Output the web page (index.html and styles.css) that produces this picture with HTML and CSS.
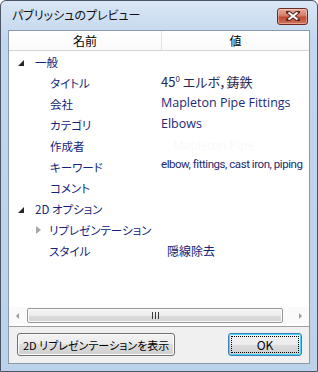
FILE: index.html
```html
<!DOCTYPE html>
<html lang="ja">
<head>
    <meta charset="UTF-8">
    <title>パブリッシュのプレビュー</title>
    <link rel="stylesheet" href="styles.css">
</head>
<body>

    <!-- Dialog window -->
    <div class="window">
        <div class="titlebar">
            <span class="title">パブリッシュのプレビュー</span>
            <div class="close-btn">
                <svg width="14" height="10" viewBox="0 0 14 10">
                    <path d="M2 1 L12 9 M12 1 L2 9" stroke="#5a2a22" stroke-width="4" stroke-linecap="square"/>
                    <path d="M2.5 1.5 L11.5 8.5 M11.5 1.5 L2.5 8.5" stroke="#fff" stroke-width="2.2"/>
                </svg>
            </div>
        </div>

        <div class="client">
            <!-- Property grid -->
            <div class="grid">
                <div class="grid-header">
                    <div class="head-name">名前</div>
                    <div class="head-value">値</div>
                </div>

                <div class="grid-body">
                    <div class="row">
                        <div class="name category"><span class="expander open"></span>一般</div>
                        <div class="value"></div>
                    </div>
                    <div class="row">
                        <div class="name child">タイトル</div>
                        <div class="value jp">45<sup>0</sup> エルボ，鋳鉄</div>
                    </div>
                    <div class="row">
                        <div class="name child">会社</div>
                        <div class="value latin">Mapleton Pipe Fittings</div>
                    </div>
                    <div class="row">
                        <div class="name child">カテゴリ</div>
                        <div class="value latin">Elbows</div>
                    </div>
                    <div class="row">
                        <div class="name child">作成者</div>
                        <div class="value ghost">Mapleton Pipe</div>
                    </div>
                    <div class="row">
                        <div class="name child">キーワード</div>
                        <div class="value narrow">elbow, fittings, cast iron, piping</div>
                    </div>
                    <div class="row">
                        <div class="name child">コメント</div>
                        <div class="value"></div>
                    </div>
                    <div class="row">
                        <div class="name category"><span class="expander open"></span>2D オプション</div>
                        <div class="value"></div>
                    </div>
                    <div class="row">
                        <div class="name sub"><span class="expander closed"></span>リプレゼンテーション</div>
                        <div class="value"></div>
                    </div>
                    <div class="row">
                        <div class="name sub-child">スタイル</div>
                        <div class="value combo">隠線除去</div>
                    </div>
                </div>

                <!-- Horizontal scrollbar -->
                <div class="hscroll">
                    <div class="arrow left"></div>
                    <div class="track">
                        <div class="thumb"><span class="grip"></span></div>
                    </div>
                    <div class="arrow right"></div>
                </div>
            </div>

            <!-- Buttons -->
            <div class="buttons">
                <button class="btn">2D リプレゼンテーションを表示</button>
                <button class="btn default"><span class="focus">OK</span></button>
            </div>
        </div>
    </div>

</body>
</html>
```

FILE: styles.css
```css
/* Reset */
* {
    margin: 0;
    padding: 0;
    box-sizing: border-box;
}

body {
    font-family: "Noto Sans CJK JP", "Noto Sans", sans-serif;
    font-feature-settings: "palt";
    background: #fff;
    width: 318px;
    height: 372px;
    overflow: hidden;
}

/* Window frame */
.window {
    width: 318px;
    height: 372px;
    border: 1px solid #4b5566;
    border-radius: 6px 6px 0 0;
    background: linear-gradient(#d9e6f5, #c2d6ee 40px, #bcd2ea);
    display: flex;
    flex-direction: column;
    padding: 0 7px 7px 7px;
}

.titlebar {
    height: 29px;
    display: flex;
    align-items: center;
    justify-content: space-between;
    padding: 0 2px 0 4px;
}

.title {
    font-size: 12px;
    color: #111;
    margin-top: -2px;
}

.close-btn {
    width: 31px;
    height: 17px;
    margin-top: 1px;
    border: 1px solid #6b2c22;
    border-radius: 3px;
    background: linear-gradient(#e8a99a, #d77a66 45%, #c24a31 55%, #d2735a);
    box-shadow: inset 0 0 0 1px rgba(255, 255, 255, 0.35);
    display: flex;
    align-items: center;
    justify-content: center;
}

/* Client area */
.client {
    flex: 1;
    background: #f0f0f0;
    border: 1px solid #8b9aab;
    display: flex;
    flex-direction: column;
}

/* Property grid */
.grid {
    height: 296px;
    background: #fff;
    border-bottom: 1px solid #a0a0a0;
    display: flex;
    flex-direction: column;
    color: #13237a;
}

.grid-header {
    height: 20px;
    display: grid;
    grid-template-columns: 153px 1fr;
    border-bottom: 1px solid #d5d5d5;
    background: linear-gradient(#fff, #fafafa);
    font-size: 12px;
    color: #000;
}

.head-name,
.head-value {
    display: flex;
    align-items: center;
    justify-content: center;
}

.head-name {
    border-right: 1px solid #e3e3e3;
}

.grid-body {
    flex: 1;
}

.row {
    height: 21px;
    display: grid;
    grid-template-columns: 152px 1fr;
    align-items: center;
    font-size: 11.5px;
}

.name {
    display: flex;
    align-items: center;
    white-space: nowrap;
}

.name.category {
    padding-left: 9px;
}

.name.child {
    padding-left: 41px;
}

.name.sub {
    padding-left: 27px;
}

.name.sub-child {
    padding-left: 40px;
}

.expander {
    width: 0;
    height: 0;
    margin-right: 10px;
}

.expander.open {
    border-left: 6px solid transparent;
    border-bottom: 6px solid #262626;
    margin-top: 2px;
    margin-right: 11px;
}

.expander.closed {
    border-top: 4px solid transparent;
    border-bottom: 4px solid transparent;
    border-left: 5px solid #a8a8a8;
    margin-right: 8px;
}

.value {
    white-space: nowrap;
}

.value.jp {
    font-size: 13px;
    color: #222a55;
    margin-top: -3px;
}

.value.jp sup {
    font-size: 8px;
}

.value.latin {
    font-family: "Open Sans", "Noto Sans", sans-serif;
    font-size: 12.5px;
    color: #1d2a78;
    margin-top: -3px;
}

.value.narrow {
    font-family: "Roboto", sans-serif;
    font-size: 11.5px;
    letter-spacing: -0.45px;
    color: #1d2a70;
    margin-top: -5px;
}

.value.ghost {
    font-family: "Open Sans", sans-serif;
    font-size: 12px;
    color: #f8f9fb;
    padding-left: 12px;
}

.value.combo {
    padding-left: 6px;
    font-size: 12px;
    color: #0f2274;
}

/* Scrollbar */
.hscroll {
    height: 17px;
    margin-bottom: 2px;
    display: flex;
    align-items: center;
    background: #fafafa;
}

.arrow {
    width: 17px;
    height: 17px;
    display: flex;
    align-items: center;
    justify-content: center;
}

.arrow::before {
    content: '';
    border-top: 3px solid transparent;
    border-bottom: 3px solid transparent;
}

.arrow.left::before {
    border-right: 3px solid #9a9a9a;
}

.arrow.right::before {
    border-left: 3px solid #9a9a9a;
}

.track {
    flex: 1;
    height: 17px;
    padding: 1px 9px 1px 1px;
}

.thumb {
    height: 15px;
    border: 1px solid #979797;
    border-radius: 2px;
    background: linear-gradient(#f5f5f5, #ececec 50%, #dcdcdc 50%, #d4d4d4);
    box-shadow: inset 0 0 0 1px #fbfbfb;
    display: flex;
    align-items: center;
    justify-content: center;
}

.grip {
    width: 7px;
    height: 7px;
    background: repeating-linear-gradient(90deg, #3c3c3c 0 1px, transparent 1px 3px);
}

/* Buttons */
.buttons {
    flex: 1;
    display: flex;
    justify-content: space-between;
    align-items: flex-start;
    padding: 6px 7px 0 8px;
}

.btn {
    height: 23px;
    padding: 0 5px;
    border: 1px solid #707070;
    border-radius: 3px;
    background: linear-gradient(#f2f2f2, #ebebeb 50%, #dddddd 50%, #cfcfcf);
    box-shadow: inset 0 0 0 1px #fcfcfc;
    font-family: "Noto Sans CJK JP", sans-serif;
    font-feature-settings: "palt";
    font-size: 11px;
    color: #000;
}

.btn.default {
    width: 74px;
    padding: 2px;
    font-size: 12px;
    border-color: #3c7fb1;
    box-shadow: inset 0 0 0 1px #48d5fb;
}

.focus {
    display: flex;
    align-items: center;
    justify-content: center;
    height: 100%;
    border: 1px dotted #000;
}
```
